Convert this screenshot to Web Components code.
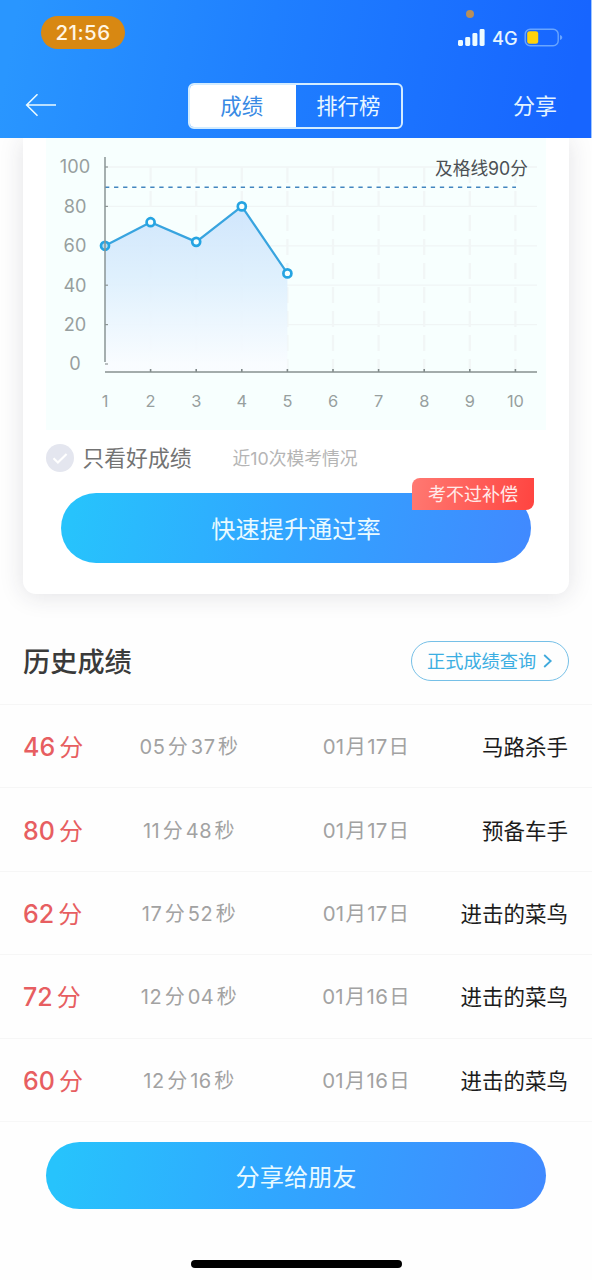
<!DOCTYPE html>
<html lang="zh-CN">
<head>
<meta charset="utf-8">
<title>成绩</title>
<style>
html,body{margin:0;padding:0}
body{width:592px;height:1280px;overflow:hidden;background:#fefefe;font-family:Inter,"Noto Sans CJK SC",sans-serif;color:#333}
</style>
</head>
<body>
<score-page></score-page>
<script>
function define(name, html) {
  customElements.define(name, class extends HTMLElement {
    connectedCallback() {
      if (this.shadowRoot) return;
      const t = document.createElement('template');
      t.innerHTML = typeof html === 'function' ? html(this) : html;
      this.attachShadow({mode: 'open'}).appendChild(t.content.cloneNode(true));
    }
  });
}

define('status-bar', `
<style>
:host{display:flex;justify-content:space-between;align-items:flex-start;height:72px;padding:0 27px 0 41px;box-sizing:border-box}
.time{margin-top:16px;width:84px;height:33px;border-radius:17px;background:#d88812;color:#fff6e4;font-size:20.5px;font-weight:500;line-height:33px;text-align:center;letter-spacing:.45px}
.right{display:flex;flex-direction:column;width:106px;padding-top:10px}
.dot{width:8px;height:8px;border-radius:50%;background:#b78f5c;margin-left:8px}
.icons{display:flex;align-items:center;height:24px;margin-top:8px}
.icons svg{flex:none}
.net{font-size:18.3px;font-weight:500;line-height:24px;color:#e5f5ff;margin-left:7px;width:36px;white-space:nowrap}
</style>
<div class="time">21:56</div>
<div class="right">
 <div class="dot"></div>
 <div class="icons">
  <svg width="27" height="20" viewBox="0 0 27 20" fill="#edfbff"><rect x="0" y="12" width="5" height="6" rx="1.4"/><rect x="7.2" y="9" width="5" height="9" rx="1.4"/><rect x="14.4" y="5" width="5" height="13" rx="1.4"/><rect x="21.6" y="1" width="5" height="17" rx="1.4"/></svg>
  <span class="net">4G</span>
  <svg width="40" height="20" viewBox="0 0 40 20"><rect x="1.2" y="1.2" width="33" height="16.6" rx="5" fill="none" stroke="#69a5ff" stroke-width="1.4"/><rect x="3.2" y="3.2" width="11" height="12.6" rx="2.4" fill="#ffd20b"/><path d="M36 7.1c3 .8 3 4.2 0 5z" fill="#69a5ff"/></svg>
 </div>
</div>`);

define('nav-bar', `
<style>
:host{display:grid;grid-template-columns:188px 215px 1fr;height:66px}
.back{padding:22px 0 0 25px}
.back svg{display:block}
.tabs{margin-top:11px;height:46px;box-sizing:border-box;border:2px solid #d3ecff;border-radius:6px;display:grid;grid-template-columns:105.5px 1fr;font-size:21.4px;line-height:42.5px;text-align:center;overflow:hidden;color:#e9f7ff}
.tabs div{height:42px}
.on{background:#fff;color:#398ae4;padding-right:2px}
.share{font-size:22px;line-height:32px;margin-top:18px;padding-right:34px;text-align:right;color:#e4f4ff}
</style>
<div class="back"><svg width="33" height="24" viewBox="0 0 33 24" fill="none" stroke="#eafaff" stroke-width="1.6"><path d="M31 11H1.5M12.5 0.3L1.7 11l10.8 10.7"/></svg></div>
<div class="tabs"><div class="on">成绩</div><div>排行榜</div></div>
<div class="share">分享</div>`);

define('trend-chart', () => {
  const X = n => 59 + 45.6 * (n - 1), Y = v => 226 - 1.97 * v;
  const data = [60, 72, 62, 80, 46];
  const pts = data.map((v, i) => `${X(i + 1)},${Y(v)}`);
  let grid = '', marks = '';
  for (const v of [0, 20, 40, 60, 80, 100]) {
    if (v) grid += `<path d="M59 ${Y(v)}H491" stroke="#f0f5f5" stroke-width="1.3"/>`;
    marks += `<path d="M59 ${Y(v)}h3" stroke="#8e9696" stroke-width="1.2"/>`;
    marks += `<text class="y" x="29" y="${Y(v) + 6.3}">${v}</text>`;
  }
  for (let n = 1; n <= 10; n++) {
    if (n > 1) {
      grid += `<path d="M${X(n)} 29V232" stroke="#f1f6f6" stroke-width="2.2" stroke-dasharray="16 8"/>`;
      marks += `<path d="M${X(n)} 231v3" stroke="#7e8888" stroke-width="1.6"/>`;
    }
    marks += `<text class="x" x="${X(n)}" y="268.8">${n}</text>`;
  }
  return `
<style>
:host{display:block;width:500px;height:292px;margin-left:23px;background:#f7fffe}
svg{display:block}
text{font-family:Inter,"Noto Sans CJK SC",sans-serif;text-anchor:middle;font-weight:400;fill:#979f9f}
.y{font-size:18.2px}.x{font-size:16.4px}
.pass{font-size:18px;fill:#4b5054;text-anchor:end}
</style>
<svg width="500" height="292" viewBox="0 0 500 292">
<defs><linearGradient id="a" x1="0" y1="69" x2="0" y2="226" gradientUnits="userSpaceOnUse"><stop offset="0" stop-color="#cde4fc"/><stop offset=".45" stop-color="#ddeffd"/><stop offset="1" stop-color="#f9fcff"/></linearGradient></defs>
${grid}
<polygon points="59,233 ${pts.join(' ')} ${X(5)},233" fill="url(#a)" opacity=".92"/>
${marks}
<path d="M59 49.3H470" stroke="#4386bf" stroke-width="1.6" stroke-dasharray="4.3 4.75"/>
<polyline points="${pts.join(' ')}" fill="none" stroke="#38a4df" stroke-width="2.2"/>
${data.map((v, i) => `<circle cx="${X(i + 1)}" cy="${Y(v)}" r="4" fill="${i ? '#f7fffe' : '#b7ddee'}" stroke="#25a4e2" stroke-width="2.7"/>`).join('')}
<path d="M59 19V224" stroke="#8a9494" stroke-width="1.5"/><path d="M59 234H491" stroke="#87908f" stroke-width="1.5"/>
<text class="pass" x="482" y="36.5" textLength="93" lengthAdjust="spacingAndGlyphs">及格线90分</text>
</svg>`;
});

define('only-best', `
<style>
:host{display:flex;align-items:center;height:56px;padding-left:23px}
svg{flex:none}
.label{font-size:21.8px;font-weight:400;color:#737373;margin-left:8.5px;width:150px;line-height:32px}
.hint{font-size:17.8px;font-weight:400;color:#b5b5b5;line-height:26px;padding-top:1px}
</style>
<svg width="28" height="28" viewBox="0 0 28 28"><circle cx="14" cy="14" r="14" fill="#e4e6ef"/><path d="M7.5 14.3l4.4 4.2 8.7-8.5" fill="none" stroke="#fff" stroke-width="2.2"/></svg>
<span class="label"><slot></slot></span><span class="hint"><slot name="hint"></slot></span>`);

define('pill-button', `
<style>
:host{display:flex;align-items:center;justify-content:center;position:relative;box-sizing:border-box;background:linear-gradient(100deg,#27c3fc 3%,#30a7ff 45%,#408aff 98%);border-radius:40px;color:#e9faff;font-size:24.2px;padding-bottom:1px}
::slotted([slot=badge]){position:absolute;right:-3px;top:-15px}
</style><slot></slot><slot name="badge"></slot>`);

define('promo-badge', `
<style>:host{display:block;width:122px;height:32px;box-sizing:border-box;border-radius:8px 0 8px 0;background:linear-gradient(100deg,#ff7972,#ff4440);color:#ffeae9;font-size:18px;line-height:33px;text-align:center}</style><slot></slot>`);

define('trend-card', `
<style>
:host{display:block;width:546px;height:456px;margin-left:23px;background:#fff;border-radius:0 0 13px 13px;box-shadow:0 2px 24px rgba(35,35,65,.13)}
pill-button{width:470px;height:70px;margin:7px 0 0 38px}
</style>
<trend-chart></trend-chart>
<only-best>只看好成绩<span slot="hint">近10次模考情况</span></only-best>
<pill-button>快速提升通过率<promo-badge slot="badge">考不过补偿</promo-badge></pill-button>`);

define('history-head', `
<style>
:host{display:flex;justify-content:space-between;align-items:center;height:110px;padding:24px 23px 0 23px;box-sizing:border-box}
h2{margin:4px 0 0;font-size:27.2px;font-weight:500;color:#3a3a3a;line-height:40px}
.link{display:flex;align-items:center;width:158px;height:40px;box-sizing:border-box;border:1.3px solid #76c0e7;border-radius:20px;color:#3caee2;font-size:18.2px;padding-left:15px;line-height:36px}
svg{margin-left:7px}
</style>
<h2>历史成绩</h2>
<div class="link">正式成绩查询<svg width="10" height="14" viewBox="0 0 10 14" fill="none" stroke="#3fa9dc" stroke-width="1.8"><path d="M1.2 1l6.5 6-6.5 6"/></svg></div>`);

define('score-row', e => {
  const [m, s] = e.getAttribute('time').split(':');
  return `
<style>
:host{display:grid;grid-template-columns:78px 174px 180px 112px;align-items:center;height:83.4px;box-sizing:border-box;padding:2px 0 0 24px;border-top:1px solid #f6f6f6;white-space:nowrap}
.s{font-size:25px;font-weight:500;color:#e75e61;display:flex;align-items:center;gap:4px;line-height:36px;margin-left:-1px}
.s i{font-style:normal;font-size:24px;font-weight:400;padding-top:2px}
.t,.d{display:flex;justify-content:center;font-size:20px;font-weight:400;color:#a2a2a2;line-height:30px}
.t{gap:2.5px;letter-spacing:.5px}
.d{letter-spacing:.3px;gap:1px}
.d b{font-weight:400;font-size:20.4px}
.n{text-align:right;font-size:21.5px;color:#1c1c1c;line-height:32px}
</style>
<div class="s"><span>${e.getAttribute('score')}</span><i>分</i></div>
<div class="t"><span>${m}</span><span>分</span><span>${s}</span><span>秒</span></div>
<div class="d">${e.getAttribute('date').split(/(\D)/).filter(Boolean).map(p => `<b>${p}</b>`).join('')}</div>
<div class="n"><slot></slot></div>`;
});

define('score-page', `
<style>
:host{display:flex;flex-direction:column;width:592px;height:1280px;overflow:hidden}
header{position:relative;z-index:1;height:138px;flex:none;box-sizing:border-box;border-right:1px solid #9fc6ff;background:linear-gradient(100deg,#2996ff 3%,#1f7fff 45%,#1765ff 96%)}
trend-card,history-head{flex:none}
.list{border-bottom:1px solid #f7f7f7;height:417px;flex:none}
.share{width:500px;height:67px;margin:20px 0 0 46px}
.home{width:211px;height:8px;border-radius:4px;background:#000;margin:51px 0 0 191px}
</style>
<header><status-bar></status-bar><nav-bar></nav-bar></header>
<trend-card></trend-card>
<history-head></history-head>
<div class="list">
<score-row score="46" time="05:37" date="01月17日">马路杀手</score-row>
<score-row score="80" time="11:48" date="01月17日">预备车手</score-row>
<score-row score="62" time="17:52" date="01月17日">进击的菜鸟</score-row>
<score-row score="72" time="12:04" date="01月16日">进击的菜鸟</score-row>
<score-row score="60" time="12:16" date="01月16日">进击的菜鸟</score-row>
</div>
<pill-button class="share">分享给朋友</pill-button>
<div class="home"></div>`);
</script>
</body>
</html>
